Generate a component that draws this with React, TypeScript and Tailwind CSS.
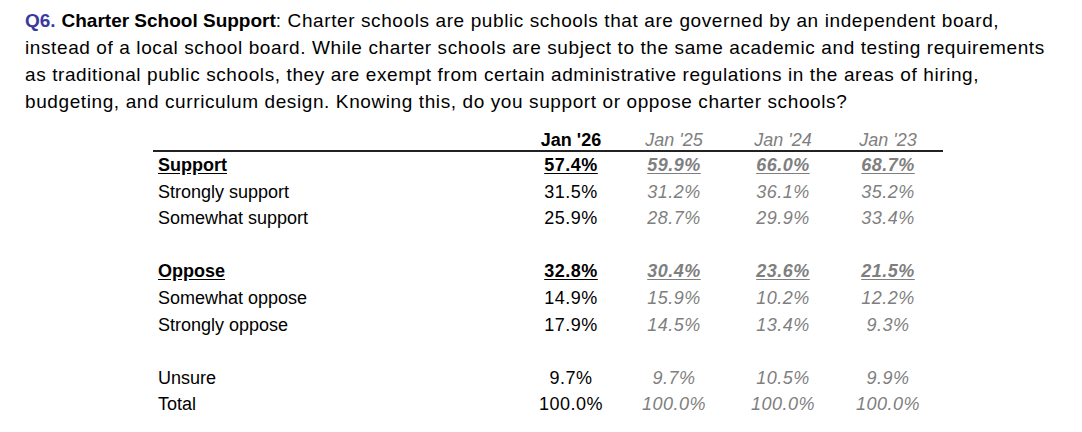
import React from 'react';

type Row = {
  label: string;
  head?: boolean;
  values?: string[];
};

const rows: Row[] = [
  { label: 'Support', head: true, values: ['57.4%', '59.9%', '66.0%', '68.7%'] },
  { label: 'Strongly support', values: ['31.5%', '31.2%', '36.1%', '35.2%'] },
  { label: 'Somewhat support', values: ['25.9%', '28.7%', '29.9%', '33.4%'] },
  { label: '' },
  { label: 'Oppose', head: true, values: ['32.8%', '30.4%', '23.6%', '21.5%'] },
  { label: 'Somewhat oppose', values: ['14.9%', '15.9%', '10.2%', '12.2%'] },
  { label: 'Strongly oppose', values: ['17.9%', '14.5%', '13.4%', '9.3%'] },
  { label: '' },
  { label: 'Unsure', values: ['9.7%', '9.7%', '10.5%', '9.9%'] },
  { label: 'Total', values: ['100.0%', '100.0%', '100.0%', '100.0%'] },
];

const years = ["Jan '26", "Jan '25", "Jan '24", "Jan '23"];

const gridCols = 'grid grid-cols-[366px_104px_102px_116px_94px]';

export default function App() {
  return (
    <div className="w-[1082px] h-[432px] bg-white text-black font-['Liberation_Sans',Arial,sans-serif]">
      {/* Question text */}
      <div className="pl-[25px] pt-[7px] text-[19px] leading-[27px] tracking-[0.6px] whitespace-nowrap">
        <div>
          <span className="font-bold text-[#3a3a9e] tracking-normal">Q6.</span>{' '}
          <span className="font-bold tracking-normal">Charter School Support</span>: Charter schools are public schools that are governed by an independent board,
        </div>
        <div>instead of a local school board. While charter schools are subject to the same academic and testing requirements</div>
        <div>as traditional public schools, they are exempt from certain administrative regulations in the areas of hiring,</div>
        <div>budgeting, and curriculum design. Knowing this, do you support or oppose charter schools?</div>
      </div>

      {/* Results table */}
      <div className="ml-[153px] mt-[12px] w-[790px] text-[18px]">
        <div className={`${gridCols} h-[25px] items-center border-b-2 border-[#222]`}>
          <div />
          {years.map((y, i) => (
            <div
              key={y}
              className={`text-center ${i === 0 ? 'font-bold text-black' : 'italic text-[#7f7f7f]'}`}
            >
              {y}
            </div>
          ))}
        </div>

        {rows.map((r, idx) => (
          <div key={idx} className={`${gridCols} h-[26.6px] items-center`}>
            <div className={`pl-[5px] ${r.head ? 'font-bold underline underline-offset-2' : ''}`}>{r.label}</div>
            {r.values?.map((v, i) => (
              <div
                key={i}
                className={`text-center tracking-[0.5px] ${i === 0 ? 'text-black' : 'italic text-[#7f7f7f]'} ${
                  r.head ? 'font-bold underline underline-offset-2' : ''
                }`}
              >
                {v}
              </div>
            ))}
          </div>
        ))}
      </div>
    </div>
  );
}
